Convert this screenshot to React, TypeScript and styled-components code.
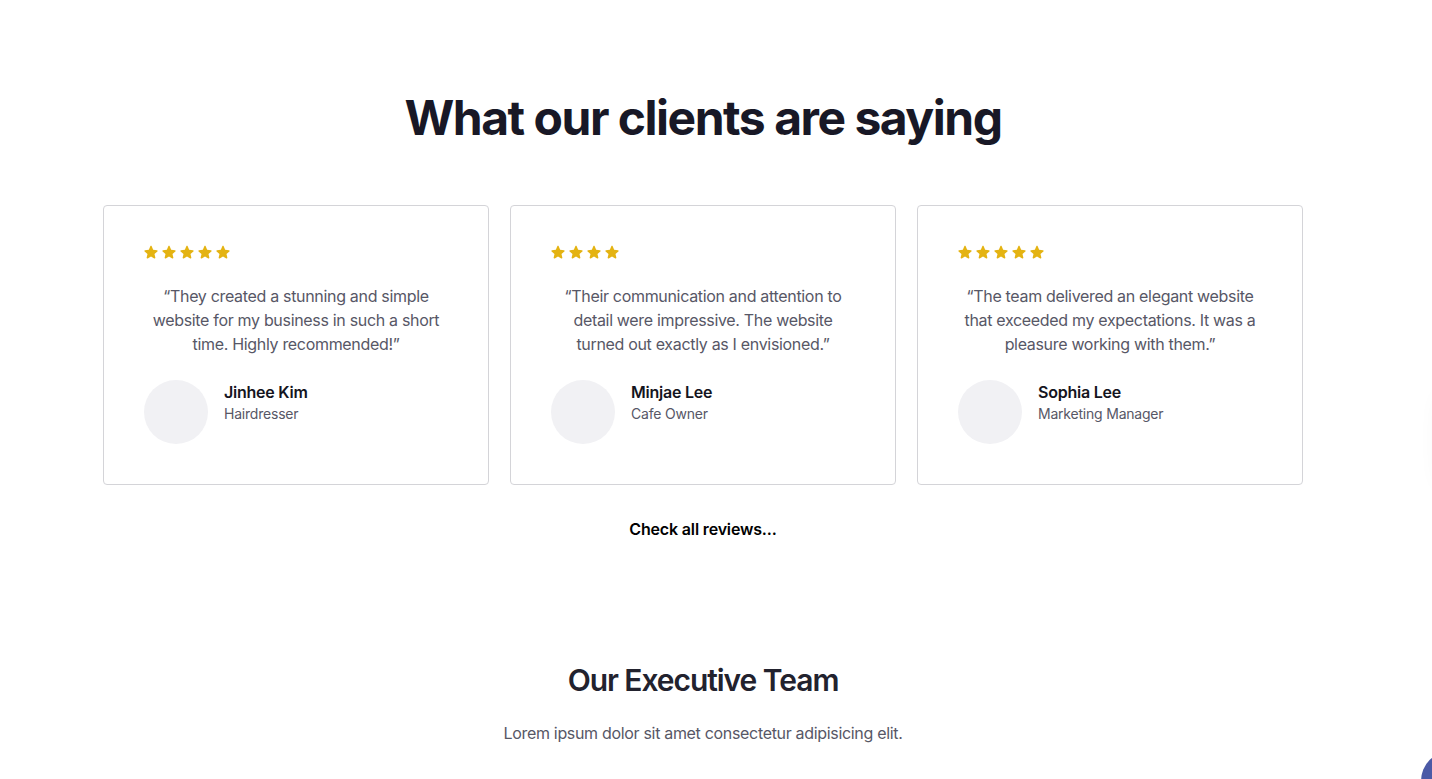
import React from "react";
import styled, { createGlobalStyle } from "styled-components";

const Global = createGlobalStyle`
  html, body { margin: 0; padding: 0; background: #ffffff; overflow: hidden; }
  body { font-family: Inter, "Noto Sans", "Liberation Sans", sans-serif; -webkit-font-smoothing: antialiased; }
  * { box-sizing: border-box; }
`;

const Page = styled.main`
  width: 1406px;
  padding-top: 88px;
`;

const Section = styled.section`
  max-width: 1200px;
  margin: 0 auto;
  display: flex;
  flex-direction: column;
  align-items: center;
`;

const Title = styled.h2`
  margin: 0;
  font-size: 48px;
  line-height: 60px;
  font-weight: 700;
  letter-spacing: -0.031em;
  color: #181826;
`;

const Grid = styled.div`
  margin-top: 57px;
  width: 100%;
  display: grid;
  grid-template-columns: repeat(3, 1fr);
  gap: 21px;
`;

const Card = styled.article`
  border: 1px solid #d4d4d8;
  border-radius: 4px;
  padding: 40px;
  display: flex;
  flex-direction: column;
`;

const Stars = styled.div`
  display: flex;
  gap: 2px;
  height: 16px;
  margin: -2px 0 0 -1px;
`;

const Quote = styled.p`
  margin: 24px 0 0;
  text-align: center;
  font-size: 16px;
  line-height: 24px;
  letter-spacing: -0.02em;
  color: #575766;
`;

const Author = styled.div`
  margin-top: 24px;
  display: flex;
  align-items: flex-start;
  gap: 16px;
`;

const Avatar = styled.div`
  width: 64px;
  height: 64px;
  border-radius: 50%;
  background: #f1f1f4;
  flex-shrink: 0;
`;

const Name = styled.div`
  font-size: 16px;
  line-height: 24px;
  font-weight: 600;
  letter-spacing: -0.015em;
  color: #141420;
`;

const Role = styled.div`
  font-size: 14px;
  line-height: 20px;
  letter-spacing: -0.015em;
  color: #575766;
`;

const More = styled.a`
  margin-top: 32px;
  font-size: 16px;
  line-height: 24px;
  font-weight: 600;
  letter-spacing: -0.01em;
  color: #000;
  text-decoration: none;
`;

const TeamTitle = styled.h3`
  margin: 121px 0 0;
  font-size: 30px;
  line-height: 36px;
  font-weight: 600;
  color: #22222e;
  letter-spacing: -0.035em;
`;

const Lead = styled.p`
  margin: 23px 0 0;
  font-size: 16px;
  line-height: 24px;
  letter-spacing: -0.02em;
  color: #575766;
`;

const Chat = styled.div`
  position: fixed;
  left: 1421px;
  top: 751px;
  width: 60px;
  height: 60px;
  border-radius: 50%;
  background: #4b5aa6;
`;

const Floating = styled.div`
  position: fixed;
  left: 1446px;
  top: 395px;
  width: 120px;
  height: 90px;
  border-radius: 12px;
  background: #fff;
  box-shadow: 0 0 28px rgba(0, 0, 0, 0.09);
`;

const Star = () => (
  <svg width="16" height="16" viewBox="0 0 20 20" fill="#e4b312">
    <path d="M10.868 2.884c-.321-.772-1.415-.772-1.736 0l-1.83 4.401-4.753.381c-.833.067-1.171 1.107-.536 1.651l3.62 3.102-1.106 4.637c-.194.813.691 1.456 1.405 1.02L10 15.591l4.069 2.485c.713.436 1.598-.207 1.404-1.02l-1.106-4.637 3.62-3.102c.635-.544.297-1.584-.536-1.65l-4.752-.382-1.831-4.401z" />
  </svg>
);

const reviews = [
  {
    stars: 5,
    text: "“They created a stunning and simple website for my business in such a short time. Highly recommended!”",
    name: "Jinhee Kim",
    role: "Hairdresser",
  },
  {
    stars: 4,
    text: "“Their communication and attention to detail were impressive. The website turned out exactly as I envisioned.”",
    name: "Minjae Lee",
    role: "Cafe Owner",
  },
  {
    stars: 5,
    text: "“The team delivered an elegant website that exceeded my expectations. It was a pleasure working with them.”",
    name: "Sophia Lee",
    role: "Marketing Manager",
  },
];

export default function App() {
  return (
    <>
      <Global />
      <Page>
        <Section>
          <Title>What our clients are saying</Title>
          <Grid>
            {reviews.map((r) => (
              <Card key={r.name}>
                <Stars>
                  {Array.from({ length: r.stars }).map((_, i) => (
                    <Star key={i} />
                  ))}
                </Stars>
                <Quote>{r.text}</Quote>
                <Author>
                  <Avatar />
                  <div>
                    <Name>{r.name}</Name>
                    <Role>{r.role}</Role>
                  </div>
                </Author>
              </Card>
            ))}
          </Grid>
          <More href="#">Check all reviews...</More>
          <TeamTitle>Our Executive Team</TeamTitle>
          <Lead>Lorem ipsum dolor sit amet consectetur adipisicing elit.</Lead>
        </Section>
      </Page>
      <Floating />
      <Chat />
    </>
  );
}
